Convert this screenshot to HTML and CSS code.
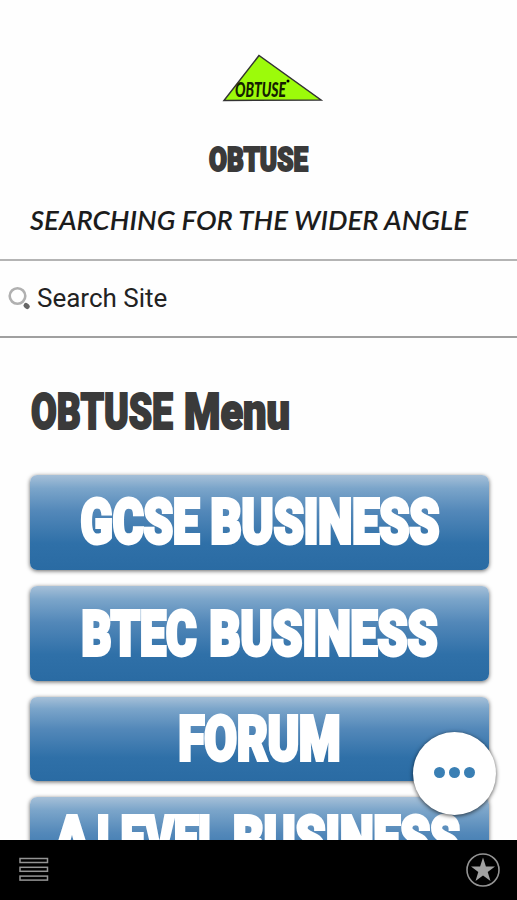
FILE: index.html
```
<!DOCTYPE html>
<html lang="en">
<head>
    <meta charset="UTF-8">
    <meta name="viewport" content="width=device-width, initial-scale=1.0">
    <title>OBTUSE</title>
    <link rel="stylesheet" href="styles.css">
</head>
<body>
    <header class="header">
        <svg class="logo" width="102" height="50" viewBox="0 0 102 50">
            <path class="logo-shape" d="M37 2.5 L2 47.5 L99 47 Z"/>
            <text class="logo-text" x="13" y="43.500" textLength="51" lengthAdjust="spacingAndGlyphs">OBTUSE</text>
            <circle cx="66" cy="28" r="1.500"/>
        </svg>
        <h1>
            <svg class="heavy" width="517" height="38">
                <text x="209" y="31" font-size="32.500" textLength="99" lengthAdjust="spacingAndGlyphs">OBTUSE</text>
            </svg>
        </h1>
        <p>
            <svg class="tagline" width="517" height="36">
                <text x="30" y="25" textLength="438" lengthAdjust="spacingAndGlyphs">SEARCHING FOR THE WIDER ANGLE</text>
            </svg>
        </p>
    </header>

    <div class="search">
        <svg width="24" height="26" viewBox="0 0 24 26">
            <circle cx="9.500" cy="11" r="7.800" fill="none" stroke="#b0b0b0" stroke-width="2.600"/>
            <path d="M18 20.500 L19.300 21.500" stroke="#666" stroke-width="5" stroke-linecap="round"/>
        </svg>
        <span>Search Site</span>
    </div>

    <main>
        <h2>
            <svg class="heavy" width="517" height="60">
                <text x="31" y="48.500" font-size="50" textLength="142" lengthAdjust="spacingAndGlyphs">OBTUSE</text>
                <text x="184" y="48.500" font-size="50" textLength="106" lengthAdjust="spacingAndGlyphs">Menu</text>
            </svg>
        </h2>
        <nav class="menu">
            <a class="item">
                <svg class="heavy" width="460" height="95">
                    <text x="50.500" y="68" textLength="119" lengthAdjust="spacingAndGlyphs">GCSE</text>
                    <text x="180.500" y="68" textLength="229" lengthAdjust="spacingAndGlyphs">BUSINESS</text>
                </svg>
            </a>
            <a class="item">
                <svg class="heavy" width="460" height="95">
                    <text x="51.500" y="69" textLength="115" lengthAdjust="spacingAndGlyphs">BTEC</text>
                    <text x="179.500" y="69" textLength="228" lengthAdjust="spacingAndGlyphs">BUSINESS</text>
                </svg>
            </a>
            <a class="item short">
                <svg class="heavy" width="460" height="84">
                    <text x="148.500" y="62.500" textLength="162" lengthAdjust="spacingAndGlyphs">FORUM</text>
                </svg>
            </a>
            <a class="item">
                <svg class="heavy" width="460" height="95">
                    <text x="24" y="63" textLength="36" lengthAdjust="spacingAndGlyphs">A</text>
                    <text x="67" y="63" textLength="125" lengthAdjust="spacingAndGlyphs">LEVEL</text>
                    <text x="203" y="63" textLength="227" lengthAdjust="spacingAndGlyphs">BUSINESS</text>
                </svg>
            </a>
        </nav>
    </main>

    <button class="more" aria-label="More">
        <i></i><i></i><i></i>
    </button>

    <footer class="bottom-bar">
        <svg width="30" height="26" viewBox="0 0 30 26">
            <g fill="none" stroke="#949494" stroke-width="1.500">
                <rect x="1" y="1.500" width="27.500" height="4"/>
                <rect x="1" y="10.300" width="27.500" height="4"/>
                <rect x="1" y="19.100" width="27.500" height="4"/>
            </g>
        </svg>
        <svg width="36" height="36" viewBox="0 0 36 36">
            <circle cx="18" cy="18" r="16" fill="none" stroke="#949494" stroke-width="1.600"/>
            <path fill="#a0a0a0" d="M18 5.500 L20.900 14.500 H30 L22.700 20 L25.500 29 L18 23.500 L10.500 29 L13.300 20 L6 14.500 H15.100 Z"/>
        </svg>
    </footer>
</body>
</html>
```
FILE: styles.css
```
body {
    margin: 0;
    height: 900px;
    overflow: hidden;
    background-color: #fefefe;
    color: #222;
    font-family: Roboto, Arial, sans-serif;
}
svg {
    display: block;
    overflow: visible;
}
h1, h2, p {
    margin: 0;
}
.header {
    box-sizing: border-box;
    height: 261px;
    padding-top: 53px;
    border-bottom: 2px solid #b4b4b4;
}
.logo {
    margin-left: 222px;
}
.logo-shape {
    fill: #9cfb0a;
    stroke: #333;
    stroke-width: 1.5;
}
.logo-text {
    font: italic 900 20px Lato, sans-serif;
    fill: #142000;
}
.header h1 {
    margin-top: 37px;
}
.header p {
    margin-top: 27px;
}
.tagline text {
    font: italic 600 26px Lato, sans-serif;
    fill: #1c1c1c;
}
.heavy text {
    font-family: Roboto, Arial, sans-serif;
    font-weight: 900;
    fill: #3a3a3a;
    stroke: #3a3a3a;
    stroke-width: 2;
}
.search {
    box-sizing: border-box;
    display: flex;
    align-items: center;
    gap: 5px;
    height: 77px;
    padding: 0 0 1px 8px;
    border-bottom: 2px solid #a0a0a0;
    font-size: 26px;
}
main h2 {
    margin-top: 42px;
}
.menu {
    display: flex;
    flex-direction: column;
    gap: 16px;
    margin: 35px 28px 0 29.5px;
}
.item {
    flex: none;
    height: 95px;
    border-radius: 7px;
    background: linear-gradient(#a6c0d8 0, #7ba5ca 14%, #5388b9 38%, #2f70a8 72%, #2a6ba3 100%);
    box-shadow: 0 1px 4px rgba(0, 0, 0, 0.6);
}
.item.short {
    height: 84px;
}
.item text {
    font-size: 61px;
    fill: #fff;
    stroke: #fff;
    stroke-width: 3.8;
}
/* floating button over the menu */
.more {
    position: absolute;
    left: 413px;
    top: 732px;
    display: flex;
    align-items: center;
    justify-content: center;
    gap: 4px;
    width: 83px;
    height: 83px;
    padding: 0 0 3px;
    border: none;
    border-radius: 50%;
    background-color: #fff;
    box-shadow: 0 1px 4px rgba(0, 0, 0, 0.7);
}
.more i {
    width: 11px;
    height: 11px;
    border-radius: 50%;
    background-color: #3a7fb4;
}
.bottom-bar {
    position: fixed;
    left: 0;
    right: 0;
    bottom: 0;
    box-sizing: border-box;
    display: flex;
    align-items: center;
    justify-content: space-between;
    height: 60px;
    padding: 0 16px 0 19px;
    background-color: #000;
}
```
